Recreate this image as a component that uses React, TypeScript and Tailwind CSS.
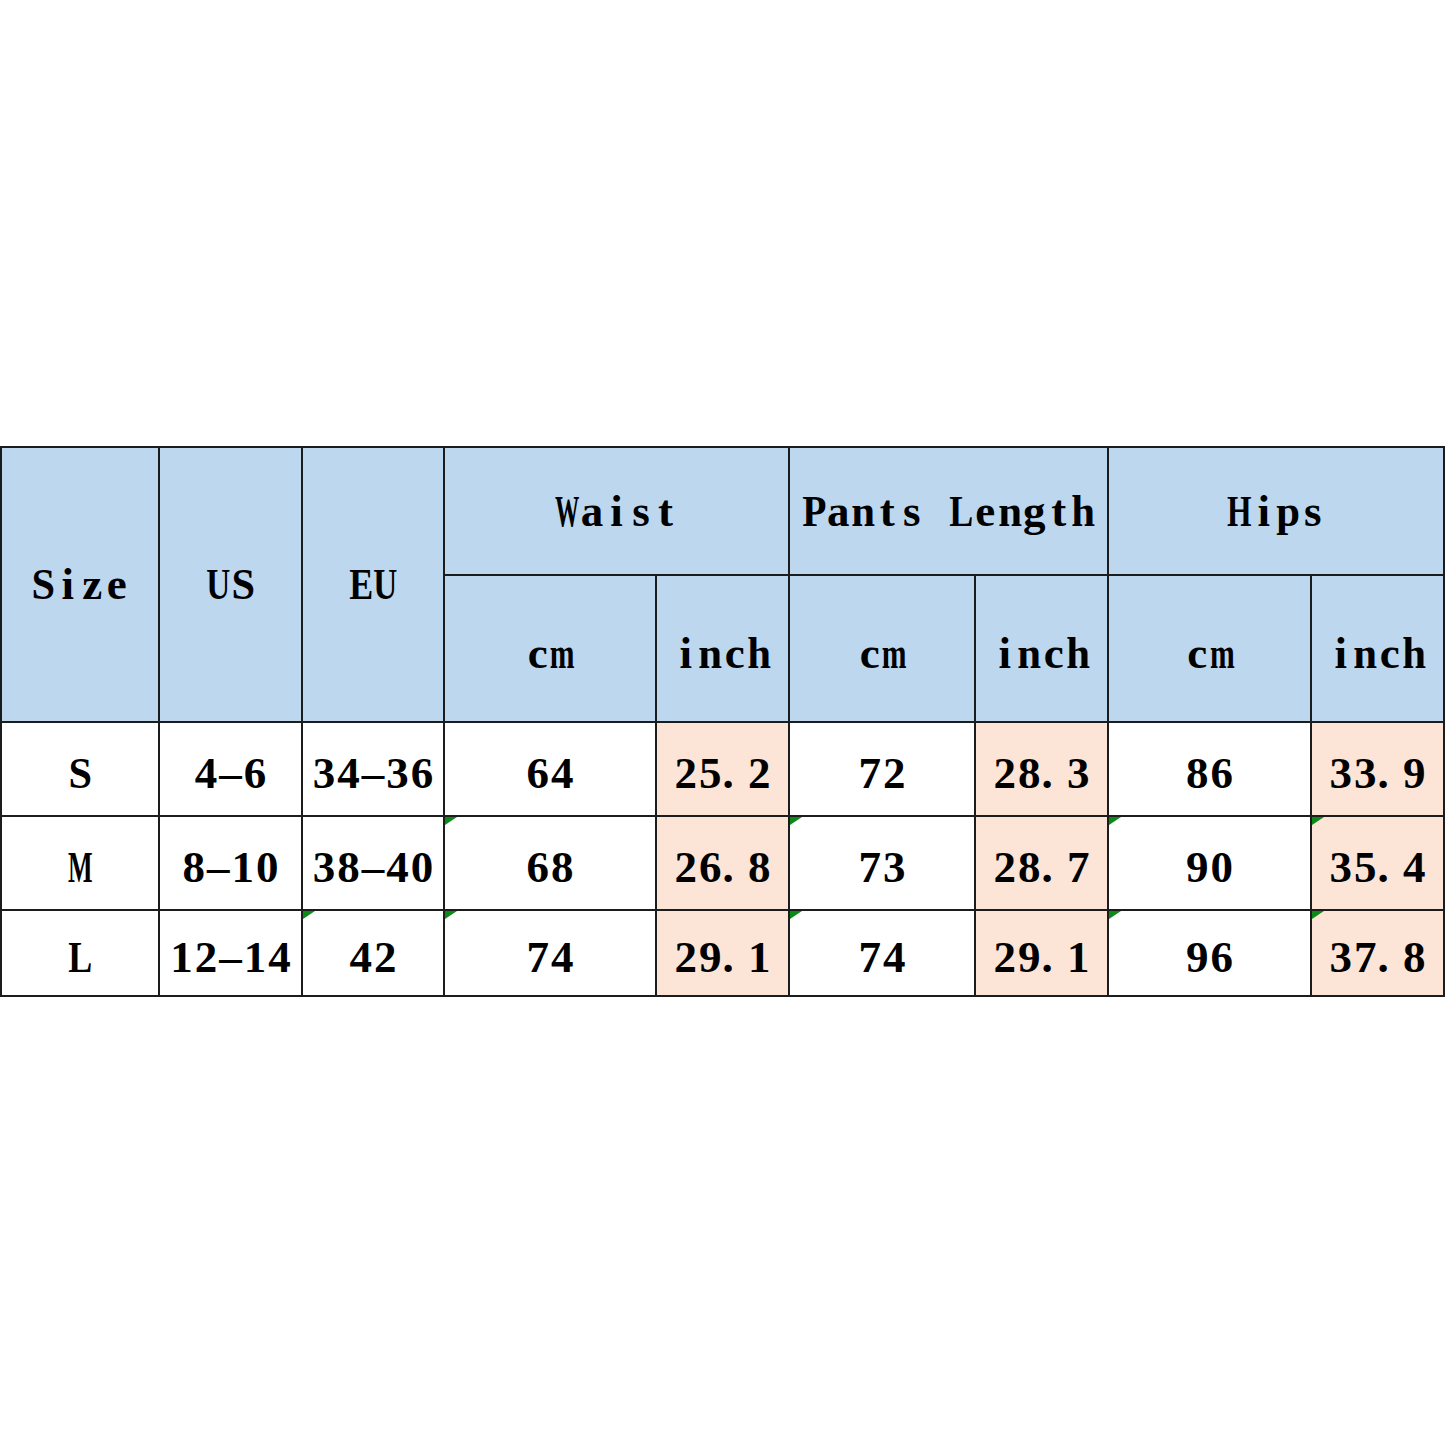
import React from "react";

const charClass: Record<string, string> = {
  W: "scale-x-[0.54]",
  m: "scale-x-[0.66]",
  M: "scale-x-[0.58]",
  H: "scale-x-[0.7]",
  U: "scale-x-[0.74]",
  E: "scale-x-[0.8]",
  L: "scale-x-[0.8]",
  P: "scale-x-[0.88]",
  S: "scale-x-[0.94]",
  n: "scale-x-[0.95]",
  h: "scale-x-[0.95]",
  p: "scale-x-[0.95]",
};

function Mono({ text }: { text: string }) {
  return (
    <span className="inline-flex">
      {text.split("").map((ch, i) => (
        <span
          key={i}
          className={`inline-flex w-[24.5px] ${ch === "." ? "justify-start" : "justify-center"} ${charClass[ch] ?? ""}`}
        >
          {ch === " " ? "\u00a0" : ch === "-" ? "\u2013" : ch}
        </span>
      ))}
    </span>
  );
}

function Tri() {
  return (
    <span className="absolute left-0 top-0 w-0 h-0 border-t-[8px] border-t-[#0b8a1a] border-r-[12px] border-r-transparent" />
  );
}

type Cell = { t: string; peach?: boolean; tri?: boolean };

const rows: Cell[][] = [
  [
    { t: "S" },
    { t: "4-6" },
    { t: "34-36" },
    { t: "64" },
    { t: "25.2", peach: true },
    { t: "72" },
    { t: "28.3", peach: true },
    { t: "86" },
    { t: "33.9", peach: true },
  ],
  [
    { t: "M" },
    { t: "8-10" },
    { t: "38-40" },
    { t: "68", tri: true },
    { t: "26.8", peach: true },
    { t: "73", tri: true },
    { t: "28.7", peach: true },
    { t: "90", tri: true },
    { t: "35.4", peach: true, tri: true },
  ],
  [
    { t: "L" },
    { t: "12-14" },
    { t: "42", tri: true },
    { t: "74", tri: true },
    { t: "29.1", peach: true },
    { t: "74", tri: true },
    { t: "29.1", peach: true },
    { t: "96", tri: true },
    { t: "37.8", peach: true, tri: true },
  ],
];

const rowH = ["h-[94px]", "h-[94px]", "h-[86px]"];

const td = "border-2 border-[#1c1c1c] text-center align-middle p-0";
const blue = "bg-[#bdd7ee]";

export default function App() {
  return (
    <div className="w-[1445px] h-[1445px] bg-white pt-[446px] font-['Liberation_Serif',serif] font-bold text-[45px] leading-none text-black">
      <table className="table-fixed border-collapse w-[1443px]">
        <colgroup>
          <col className="w-[158px]" />
          <col className="w-[143px]" />
          <col className="w-[142px]" />
          <col className="w-[212px]" />
          <col className="w-[133px]" />
          <col className="w-[186px]" />
          <col className="w-[133px]" />
          <col className="w-[203px]" />
          <col className="w-[133px]" />
        </colgroup>
        <tbody>
          <tr className="h-[128px]">
            <td rowSpan={2} className={`${td} ${blue}`}>
              <Mono text="Size" />
            </td>
            <td rowSpan={2} className={`${td} ${blue}`}>
              <Mono text="US" />
            </td>
            <td rowSpan={2} className={`${td} ${blue}`}>
              <Mono text="EU" />
            </td>
            <td colSpan={2} className={`${td} ${blue}`}>
              <Mono text="Waist" />
            </td>
            <td colSpan={2} className={`${td} ${blue}`}>
              <Mono text="Pants Length" />
            </td>
            <td colSpan={2} className={`${td} ${blue}`}>
              <Mono text="Hips" />
            </td>
          </tr>
          <tr className="h-[147px]">
            {["cm", "inch", "cm", "inch", "cm", "inch"].map((h, i) => (
              <td key={i} className={`${td} ${blue} pt-[10px]`}>
                <Mono text={h} />
              </td>
            ))}
          </tr>
          {rows.map((r, ri) => (
            <tr key={ri} className={rowH[ri]}>
              {r.map((c, ci) => (
                <td
                  key={ci}
                  className={`${td} relative pt-[8px] ${c.peach ? "bg-[#fce4d6]" : "bg-white"}`}
                >
                  {c.tri && <Tri />}
                  <Mono text={c.t} />
                </td>
              ))}
            </tr>
          ))}
        </tbody>
      </table>
    </div>
  );
}
